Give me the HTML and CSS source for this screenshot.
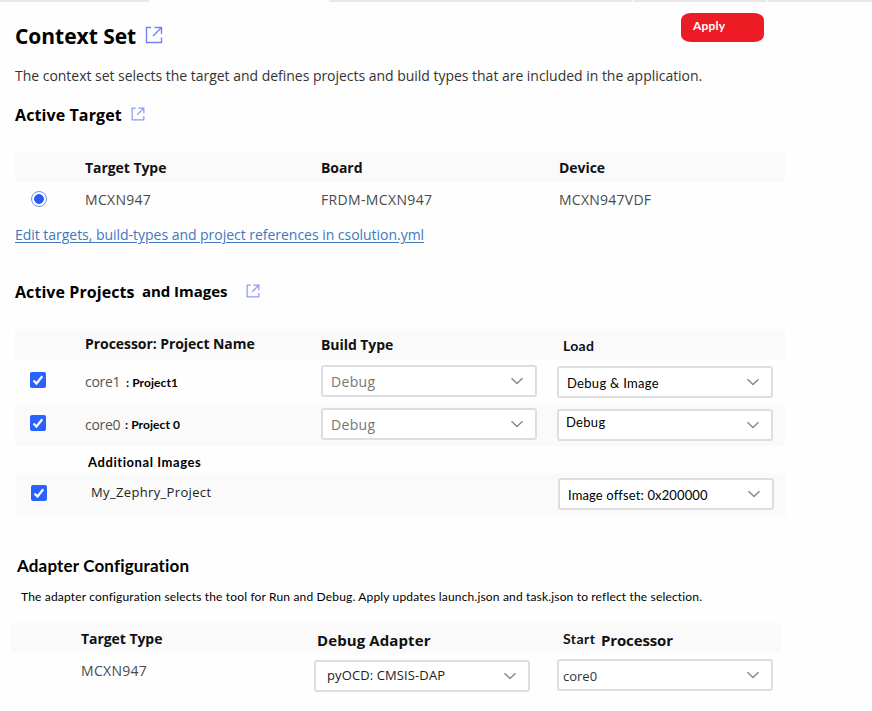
FILE: index.html
```html
<!DOCTYPE html>
<html lang="en">
<head>
<meta charset="utf-8">
<title>Context Set</title>
<link rel="stylesheet" href="styles.css">
</head>
<body>
<svg class="defs" width="0" height="0">
  <symbol id="open" viewBox="0 0 18 18">
    <path d="M6 1.500H1.500v15h15V11.500M9.500 1.500h7V8M16.500 1.500L8 10"/>
  </symbol>
  <symbol id="chevron" viewBox="0 0 14 8"><path d="M1.5 1.2L7 6.5l5.500-5.300"/></symbol>
  <symbol id="check" viewBox="0 0 16 16"><path d="M3.500 8.500L6.500 11.500L12.300 4.300"/></symbol>
</svg>

<div class="tabs"><i class="tab-a"></i><i class="tab-b"></i><i class="tab-c"></i><i class="tab-d"></i></div>

<header class="header">
  <h1>Context Set</h1>
  <svg class="open-lg"><use href="#open"/></svg>
  <button class="apply">Apply</button>
</header>
<p class="intro">The context set selects the target and defines projects and build types that are included in the application.</p>

<section class="target">
  <h2>Active Target<svg class="open-sm"><use href="#open"/></svg></h2>
  <div class="row head">
    <span></span><b>Target Type</b><b class="board">Board</b><b class="device">Device</b>
  </div>
  <div class="row values">
    <span class="radio"></span><span class="v1">MCXN947</span><span class="v2">FRDM-MCXN947</span><span class="v3 device">MCXN947VDF</span>
  </div>
  <a class="edit">Edit targets, build-types and project references in csolution.yml</a>
</section>

<section class="projects">
  <h2><span class="h-a">Active Projects</span><span class="h-b">and Images</span><svg class="open-sm"><use href="#open"/></svg></h2>
  <div class="row head">
    <span></span><b>Processor: Project Name</b><b class="build">Build Type</b><b class="calibri load">Load</b>
  </div>
  <div class="row item">
    <svg class="box"><use href="#check"/></svg>
    <div class="name"><span class="core">core1</span><b class="calibri project one">: Project1</b></div>
    <div class="select muted"><span>Debug</span><svg><use href="#chevron"/></svg></div>
    <div class="select second"><span class="calibri di">Debug &amp; Image</span><svg><use href="#chevron"/></svg></div>
  </div>
  <div class="row item shade">
    <svg class="box"><use href="#check"/></svg>
    <div class="name"><span class="core">core0</span><b class="calibri project zero">: Project 0</b></div>
    <div class="select muted"><span>Debug</span><svg><use href="#chevron"/></svg></div>
    <div class="select second"><span class="calibri d">Debug</span><svg><use href="#chevron"/></svg></div>
  </div>
  <h3 class="calibri">Additional Images</h3>
  <div class="row item shade image">
    <svg class="box"><use href="#check"/></svg>
    <div class="zephyr">My_Zephry_Project</div>
    <span></span>
    <div class="select second"><span class="calibri off">Image offset: 0x200000</span><svg><use href="#chevron"/></svg></div>
  </div>
</section>

<section class="adapter">
  <h2 class="calibri">Adapter Configuration</h2>
  <p class="calibri">The adapter configuration selects the tool for Run and Debug. Apply updates launch.json and task.json to reflect the selection.</p>
  <div class="row head">
    <span></span><b>Target Type</b><b class="debug-adapter">Debug Adapter</b>
    <b class="start"><span class="calibri">Start</span><span class="processor">Processor</span></b>
  </div>
  <div class="row controls">
    <span></span><span class="v1">MCXN947</span>
    <div class="select dap"><span>pyOCD: CMSIS-DAP</span><svg><use href="#chevron"/></svg></div>
    <div class="select cpu"><span>core0</span><svg><use href="#chevron"/></svg></div>
  </div>
</section>
</body>
</html>
```
FILE: styles.css
```css
* { box-sizing: border-box; }
body { margin: 0; height: 711px; overflow: hidden; background: #fefefe; color: #000; font: 14px/20px "Open Sans", sans-serif; }
h1, h2, h3, p { margin: 0; white-space: nowrap; }
.defs { position: absolute; }
.defs path { fill: none; }
.calibri { font-family: Lato, sans-serif; }

.tabs { display: flex; height: 2px; }
.tabs i { background: #e8e8e8; }
.tab-a { width: 149px; margin-right: 180px; }
.tab-b { width: 303px; margin-right: 1px; }
.tab-c { width: 134px; margin-right: 1px; }
.tab-d { flex: 1; }

.header { display: flex; align-items: flex-start; height: 64px; padding-left: 15px; }
h1 { width: 131px; margin-top: 19px; font-size: 21px; line-height: 30px; font-weight: 700; letter-spacing: -0.03px; }
.open-lg { width: 18px; height: 18px; margin: 24px 0 0 -1px; stroke: #7581f7; stroke-width: 1.400; fill: none; }
.open-sm { width: 14px; height: 14px; margin-top: 2px; stroke: #8f98f8; stroke-width: 1.600; fill: none; }
.apply { width: 83px; height: 29px; margin: 11px 0 0 518px; padding: 0 0 4px 12px; border: 0; border-radius: 10px / 7px; background: #ed1c24; color: #fff; font: 700 12px/20px Lato, sans-serif; letter-spacing: 0.2px; text-align: left; }
.intro { margin-left: 15px; color: #333; letter-spacing: -0.025px; }

.row { display: grid; grid-template-columns: 70px 236px 236px 228px; width: 770px; align-items: start; white-space: nowrap; }
.head { height: 30px; padding-top: 6px; background: #fafafa; }
.head b { font-weight: 700; letter-spacing: -0.06px; color: #111; }
h2 { display: flex; height: 20px; font-size: 16px; font-weight: 700; }

.target { margin-left: 15px; padding-top: 19px; }
.target h2 { margin-bottom: 27px; letter-spacing: 0.1px; }
.target .open-sm { margin-left: 9px; }
.device { margin-left: 2px; }
.values { height: 33px; padding-top: 8px; color: #4a4a4a; }
.v1 { letter-spacing: 0.3px; color: #4a4a4a; }
.v2 { letter-spacing: 0.35px; }
.v3 { letter-spacing: 0.25px; }
.radio { width: 16px; height: 16px; margin: 1px 0 0 16px; border: 1px solid #6f92fa; border-radius: 50%; background: radial-gradient(circle, #2a5cf5 0 4.500px, #fff 5.200px); }
.edit { display: block; width: 410px; margin-top: 10px; color: #3f78bd; letter-spacing: -0.03px; white-space: nowrap; text-decoration: underline; text-underline-offset: 2px; }

.projects { margin-left: 15px; padding-top: 37px; }
.projects h2 { margin-bottom: 27px; }
.h-a { width: 127px; letter-spacing: 0.07px; }
.h-b { width: 104px; margin-top: -1px; font-size: 15px; letter-spacing: -0.05px; }
.projects .head { height: 31px; }
.projects .head b:nth-child(2) { margin-top: -1px; }
.load.calibri { margin: 1px 0 0 6px; letter-spacing: 0.33px; }
.item { height: 43px; }
.shade { background: #fafafa; }
.box { width: 16px; height: 16px; margin: 12px 0 0 15px; border-radius: 2px; background: #2962ff; stroke: #fff; stroke-width: 2.200; fill: none; }
.name { display: flex; padding-top: 12px; }
.core { width: 41px; color: #555; letter-spacing: -0.3px; }
.project { font-size: 12px; letter-spacing: 0.09px; }
.one { margin-top: 1px; }
.zero { margin: 0 0 0 -1px; }
.select { display: flex; justify-content: space-between; align-items: flex-start; width: 216px; height: 32px; margin-top: 5px; padding: 5px 11px 0 8px; border: 2px solid #dedede; border-radius: 3px; background: #fff; }
.select svg { width: 14px; height: 8px; margin-top: 5px; stroke: #8a8a8a; stroke-width: 1.500; fill: none; }
.muted { color: #757575; letter-spacing: 0.31px; }
.second { margin: 6px 0 0; }
.di, .d, .off { font-size: 13px; letter-spacing: 0.3px; }
.d { margin: -4px 0 0 -1px; }
.off { letter-spacing: 0.13px; }
h3 { height: 27px; padding: 6px 0 0 73px; font-size: 13px; line-height: 20px; font-weight: 700; letter-spacing: 0.58px; }
.image { margin-left: 1px; }
.zephyr { padding: 9px 0 0 5px; font-size: 13px; letter-spacing: 0.35px; color: #222; }
.image .select { margin-top: 5px; }

.adapter { padding-top: 40px; }
.adapter h2 { margin: 0 0 25px 17px; font-size: 17px; letter-spacing: 0.16px; }
.adapter p { height: 20px; margin: -14px 0 16px 21px; font-size: 12px; letter-spacing: 0.165px; }
.adapter .row { margin-left: 11px; }
.debug-adapter { margin: 1px 0 0; font-size: 15px; }
.head .debug-adapter { letter-spacing: 0.1px; }
.start { display: flex; margin-left: 10px; }
.start .calibri { width: 38px; letter-spacing: 0.47px; }
.processor { margin-top: 1px; font-size: 15px; letter-spacing: -0.14px; }
.controls .v1 { margin-top: 8px; }
.dap { margin: 7px 0 0 -3px; padding: 3px 11px 0 11px; font-size: 13px; color: #222; }
.dap svg { margin-top: 7px; }
.dap span { letter-spacing: 0.11px; }
.cpu { margin: 6px 0 0 4px; padding-left: 4px; color: #333; font-size: 13px; }
```
